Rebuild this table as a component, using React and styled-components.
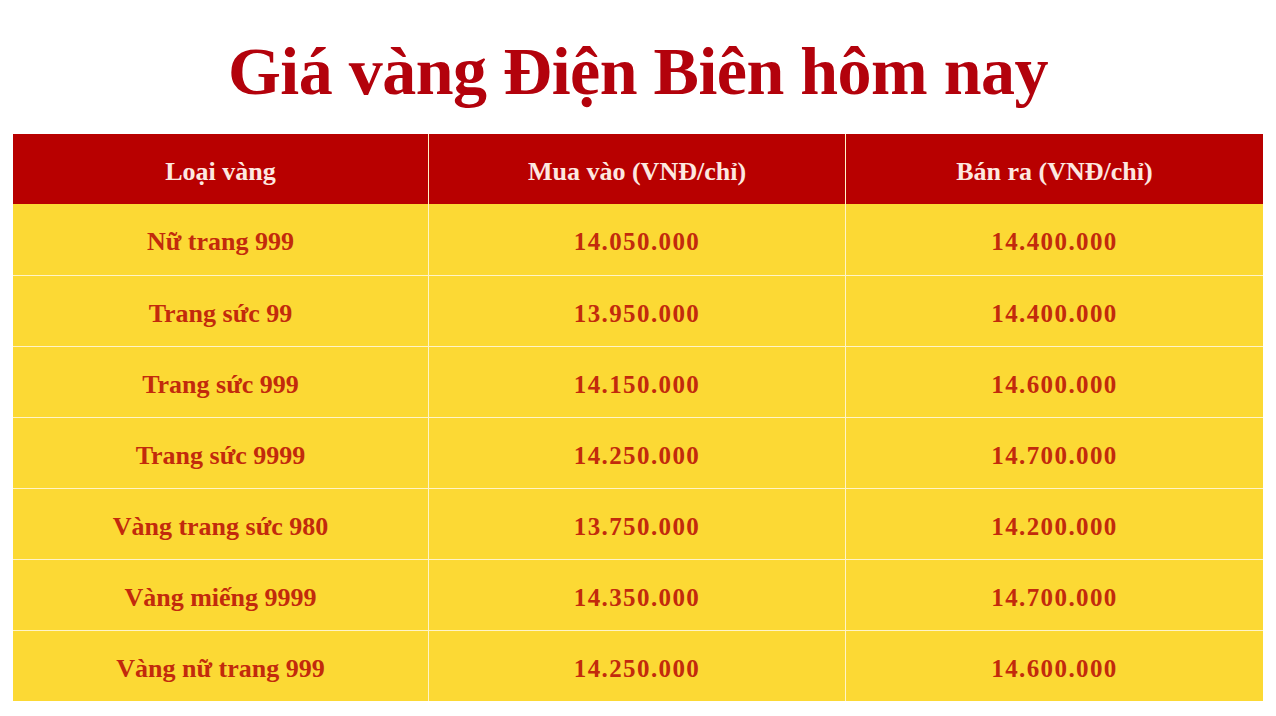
import React from "react";
import styled, { createGlobalStyle } from "styled-components";

const GlobalStyle = createGlobalStyle`
  html, body {
    margin: 0;
    padding: 0;
    background: #ffffff;
  }
`;

const Page = styled.div`
  width: 1276px;
  height: 716px;
  box-sizing: border-box;
  padding: 0 13px;
  font-family: "Liberation Serif", "DejaVu Serif", serif;
`;

const Title = styled.h1`
  margin: 0;
  height: 134px;
  box-sizing: border-box;
  padding-top: 32px;
  text-align: center;
  color: #b3020c;
  font-size: 68px;
  line-height: normal;
  font-weight: 700;
  letter-spacing: -0.5px;
`;

const Table = styled.div`
  display: grid;
  grid-template-columns: 416px 417px 417px;
  background: #fcd934;
`;

const Cell = styled.div`
  height: ${(p) => (p.$head ? "70px" : "71px")};
  display: flex;
  align-items: center;
  justify-content: center;
  box-sizing: border-box;
  padding-top: 5px;
  border-right: ${(p) => (p.$last ? "none" : "1px solid #fff4c8")};
  border-top: ${(p) => (p.$head || p.$first ? "none" : "1px solid #fff4c8")};
  background: ${(p) => (p.$head ? "#b80000" : "#fcd934")};
  color: ${(p) => (p.$head ? "#fde8e0" : "#c22a0c")};
  font-size: ${(p) => (p.$num ? "25px" : "26px")};
  letter-spacing: ${(p) => (p.$num ? "1.4px" : "0")};
  font-weight: 700;
`;

const heads = ["Loại vàng", "Mua vào (VNĐ/chỉ)", "Bán ra (VNĐ/chỉ)"];

const rows = [
  ["Nữ trang 999", "14.050.000", "14.400.000"],
  ["Trang sức 99", "13.950.000", "14.400.000"],
  ["Trang sức 999", "14.150.000", "14.600.000"],
  ["Trang sức 9999", "14.250.000", "14.700.000"],
  ["Vàng trang sức 980", "13.750.000", "14.200.000"],
  ["Vàng miếng 9999", "14.350.000", "14.700.000"],
  ["Vàng nữ trang 999", "14.250.000", "14.600.000"],
];

const App = () => {
  return (
    <Page>
      <GlobalStyle />
      <Title>Giá vàng Điện Biên hôm nay</Title>
      <Table>
        {heads.map((h, i) => (
          <Cell key={h} $head $last={i === 2}>
            {h}
          </Cell>
        ))}
        {rows.map((r, ri) =>
          r.map((c, ci) => (
            <Cell
              key={ri + "-" + ci}
              $first={ri === 0}
              $last={ci === 2}
              $num={ci > 0}
            >
              {c}
            </Cell>
          ))
        )}
      </Table>
    </Page>
  );
};

export default App;
